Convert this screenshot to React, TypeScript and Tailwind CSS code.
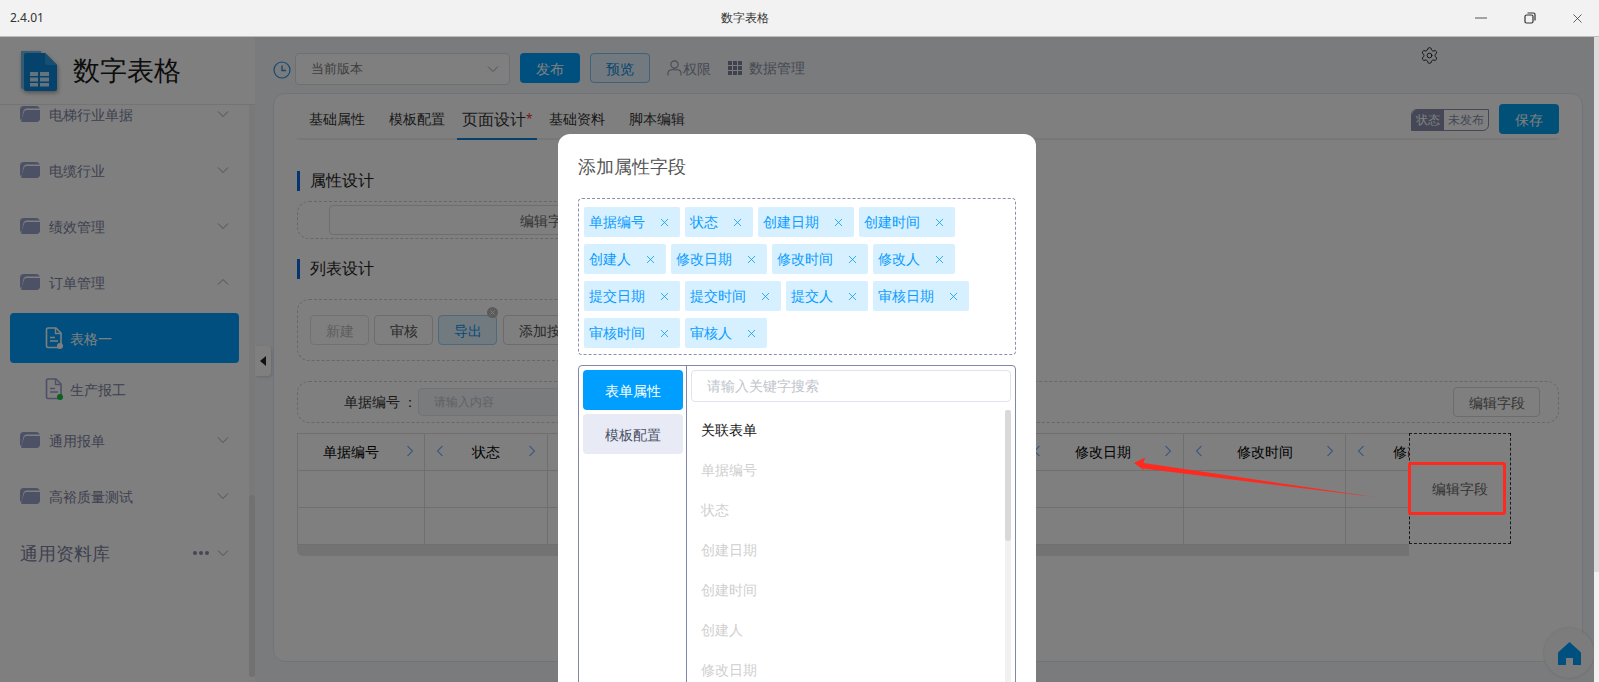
import { Settings, X } from "lucide-react";

const chips = [
  "单据编号", "状态", "创建日期", "创建时间", "创建人", "修改日期", "修改时间", "修改人",
  "提交日期", "提交时间", "提交人", "审核日期", "审核时间", "审核人",
];

const fieldList = ["单据编号", "状态", "创建日期", "创建时间", "创建人", "修改日期", "修改时间"];

const tableCols = ["状态", "创建日期", "创建时间", "创建人", "修改日期", "修改时间"];

function Chevron({ up = false }: { up?: boolean }) {
  return (
    <svg width="12" height="8" viewBox="0 0 12 8" fill="none" className={up ? "rotate-180" : ""}>
      <path d="M1 1.5 6 6.5 11 1.5" stroke="#9aa0b4" strokeWidth="1" />
    </svg>
  );
}

function ArrowIcon({ left = false }: { left?: boolean }) {
  return (
    <svg width="8" height="12" viewBox="0 0 8 12" fill="none" className="shrink-0">
      <path d={left ? "M6.5 1 1.5 6 6.5 11" : "M1.5 1 6.5 6 1.5 11"} stroke="#78b4ff" strokeWidth="1.1" />
    </svg>
  );
}

function FolderIcon() {
  return (
    <svg width="20" height="16" viewBox="0 0 20 16" className="shrink-0">
      <path d="M0 3.5C0 1.5 1.5 0 3.5 0H16c2 0 3.5 1 3.6 2.6H7C4.6 2.6 3.6 4 3.2 6L1.8 13 .8 14C.3 13.5 0 12.8 0 12Z" fill="#9aa2cc" />
      <path d="M6.4 4H20v8.5c0 2-1.5 3.5-3.5 3.5H3c-1 0-1.8-.4-2-1L4 6c.3-1.2 1-2 2.4-2Z" fill="#9aa2cc" />
    </svg>
  );
}

function DocIcon({ active = false }: { active?: boolean }) {
  const c = active ? "#ffffff" : "#9aa2cc";
  return (
    <svg width="18" height="22" viewBox="0 0 18 22" fill="none" className="shrink-0">
      <path d="M3 1h8l5 5v13a1.5 1.5 0 0 1-1.5 1.5H3A1.5 1.5 0 0 1 1.5 19V2.5A1.5 1.5 0 0 1 3 1Z" stroke={c} strokeWidth="1.6" />
      <path d="M10.5 1v5.5H16" stroke={c} strokeWidth="1.4" />
      <path d="M5 10.5h5M5 14h8" stroke={c} strokeWidth="1.6" />
      <circle cx="15" cy="19" r="3" fill={active ? "#ffffff" : "#10c23a"} />
    </svg>
  );
}

function Logo() {
  return (
    <svg width="38" height="42" viewBox="0 0 38 42" className="shrink-0 drop-shadow-[1px_2px_2px_rgba(0,0,0,0.35)]">
      <path d="M1 1h20v38H3a2 2 0 0 1-2-2Z" fill="#6fb6e6" />
      <path d="M6 3h19l12 12v24a2 2 0 0 1-2 2H6a2 2 0 0 1-2-2V5a2 2 0 0 1 2-2Z" fill="#0a86d8" />
      <path d="M25 3l12 12H27a2 2 0 0 1-2-2Z" fill="#2f9fe6" />
      <path d="M10 22h8v4h-8zM20 22h9v4h-9zM10 27.5h8v4h-8zM20 27.5h9v4h-9zM10 33h8v3.500h-8zM20 33h9v3.500h-9z" fill="#c9e6fa" />
    </svg>
  );
}

function NavRow({ label, up = false }: { label: string; up?: boolean }) {
  return (
    <div className="flex h-[56px] shrink-0 items-center pl-[20px] pr-[20px]">
      <FolderIcon />
      <span className="ml-[9px] text-[14px] text-[#7b819f]">{label}</span>
      <span className="ml-auto flex">
        <Chevron up={up} />
      </span>
    </div>
  );
}

function Sidebar() {
  return (
    <aside className="flex h-full w-[255px] shrink-0 flex-col bg-white">
      <div className="flex h-[68px] shrink-0 items-center border-b border-[#e8e8e8] bg-white pl-[20px]">
        <Logo />
        <span className="ml-[15px] text-[27px] text-[#1a1a1a]">数字表格</span>
      </div>
      <div className="flex min-h-0 flex-1">
        <nav className="min-w-0 flex-1 overflow-hidden">
          <div className="-mt-[19px]">
            <NavRow label="电梯行业单据" />
            <NavRow label="电缆行业" />
            <NavRow label="绩效管理" />
            <NavRow label="订单管理" up />
            <div className="ml-[10px] mt-[3px] flex h-[50px] w-[229px] items-center rounded-[4px] bg-[#009fff] pl-[35px] text-white">
              <DocIcon active />
              <span className="ml-[7px] text-[14px]">表格一</span>
            </div>
            <div className="flex h-[54px] items-center pb-[2px] pl-[45px]">
              <DocIcon />
              <span className="ml-[7px] text-[14px] text-[#7b819f]">生产报工</span>
            </div>
            <div className="-mt-[5px]">
              <NavRow label="通用报单" />
              <NavRow label="高裕质量测试" />
            </div>
            <div className="mt-[1px] flex h-[56px] items-center pl-[20px] pr-[20px]">
              <span className="text-[18px] text-[#7b819f]">通用资料库</span>
              <span className="ml-auto mr-[8px] flex gap-[2px]">
                <i className="block size-[4px] rounded-full bg-[#8a90a8]" />
                <i className="block size-[4px] rounded-full bg-[#8a90a8]" />
                <i className="block size-[4px] rounded-full bg-[#8a90a8]" />
              </span>
              <Chevron />
            </div>
          </div>
        </nav>
        <div className="mb-[5px] w-[6px] shrink-0 bg-[#f3f3f3]">
          <div className="mt-[390px] h-[182px] rounded-[3px] bg-[#e2e2e2]" />
        </div>
      </div>
    </aside>
  );
}

function TopBar() {
  return (
    <div className="flex h-[56px] shrink-0 items-start pt-[16px]">
      <svg width="18" height="18" viewBox="0 0 18 18" fill="none" className="mt-[8px] shrink-0">
        <circle cx="9" cy="9" r="8" stroke="#2f8fe0" strokeWidth="1.2" />
        <path d="M9 4.500V9.500H13" stroke="#2f8fe0" strokeWidth="1.4" />
      </svg>
      <div className="ml-[4px] flex h-[32px] w-[215px] items-center rounded-[4px] border border-[#dcdfe6] bg-white pl-[15px] pr-[10px]">
        <span className="text-[13px] text-[#7d7d7d]">当前版本</span>
        <span className="ml-auto flex"><Chevron /></span>
      </div>
      <button className="ml-[10px] h-[30px] w-[60px] rounded-[4px] bg-[#00a0ff] text-[14px] text-white">发布</button>
      <button className="ml-[10px] h-[30px] w-[60px] rounded-[4px] border border-[#7cc4ee] bg-[#e5f4ff] text-[14px] text-[#0a8be0]">预览</button>
      <div className="ml-[17px] flex h-[30px] items-center text-[#8e93a8]">
        <svg width="15" height="16" viewBox="0 0 15 16" fill="none" className="shrink-0">
          <circle cx="7.500" cy="4.500" r="3.600" stroke="#9095a8" strokeWidth="1.100" />
          <path d="M1 15.500v-2C1 11 3 9.800 5 9.800h5c2 0 4 1.200 4 3.700v2" stroke="#9095a8" strokeWidth="1.100" />
        </svg>
        <span className="ml-[1px] text-[14px]">权限</span>
      </div>
      <div className="ml-[17px] flex h-[30px] items-center text-[#8e93a8]">
        <span className="grid grid-cols-3 gap-[1px]">
          {Array.from({ length: 9 }).map((_, i) => (
            <i key={i} className="block size-[4px] bg-[#7e849c]" />
          ))}
        </span>
        <span className="ml-[7px] text-[13.500px]">数据管理</span>
      </div>
      <Settings className="ml-[615px] mt-[-7px] size-[19px] text-[#222222]" strokeWidth={1.200} />
    </div>
  );
}

function Heading({ children }: { children: string }) {
  return (
    <div className="flex h-[20px] items-center border-l-[3px] border-[#0a6be0] pb-[2px] pl-[10px] text-[16px] font-medium text-[#222222]">
      {children}
    </div>
  );
}

function ActionButton({ children, tone = "plain" }: { children: string; tone?: "plain" | "muted" | "blue" }) {
  const cls =
    tone === "muted"
      ? "text-[#bdbdbd] border-[#e2e2e2]"
      : tone === "blue"
        ? "text-[#0a96f0] border-[#9dd3f5] bg-[#e3f4ff]"
        : "text-[#555555] border-[#d8d8d8]";
  return (
    <button className={`h-[30px] w-[59px] shrink-0 rounded-[4px] border text-[14px] ${cls}`}>{children}</button>
  );
}

function DesignTable() {
  return (
    <div className="relative mt-[10px]">
      <div className="w-[1112px] overflow-hidden">
        <div className="grid w-max grid-cols-[127px_123px_158px_158px_158px_162px_162px_162px] grid-rows-[37px_37px_37px] border-l border-t border-[#dedede] text-[14px] text-black">
          <div className="flex items-center border-b border-r border-[#dedede] pb-[2px] pl-[25px] pr-[10px]">
            单据编号
            <span className="ml-auto flex"><ArrowIcon /></span>
          </div>
          {tableCols.map((col) => (
            <div key={col} className="flex items-center justify-between border-b border-r border-[#dedede] px-[11px] pb-[2px]">
              <ArrowIcon left />
              <span>{col}</span>
              <ArrowIcon />
            </div>
          ))}
          <div className="flex items-center border-b border-r border-[#dedede] pb-[2px] pl-[11px]">
            <ArrowIcon left />
            <span className="ml-[28px]">修改人</span>
          </div>
          {Array.from({ length: 16 }).map((_, i) => (
            <div key={i} className="border-b border-r border-[#dedede]" />
          ))}
        </div>
        <div className="h-[11px] rounded-bl-[6px] rounded-tl-[2px] bg-[#e6e6e6]" />
      </div>
      <div className="absolute left-[1112px] top-0 flex h-[111px] w-[102px] items-center justify-center border border-dashed border-[#333333] bg-white text-[14px] text-[#666666]">
        编辑字段
      </div>
    </div>
  );
}

function MainCard() {
  return (
    <div className="flex min-h-0 flex-1 flex-col rounded-[12px] border border-[#dfe8f7] bg-white px-[23px]">
      <div className="flex h-[46px] shrink-0 items-start border-b-2 border-[#eeeeee]">
        <div className="flex h-[46px] items-center px-[12px] pt-[3px] text-[14px] text-[#333333]">基础属性</div>
        <div className="flex h-[46px] items-center px-[12px] pt-[3px] text-[14px] text-[#333333]">模板配置</div>
        <div className="flex h-[46px] w-[80px] items-center border-b-2 border-[#0a84d6] pl-[5px] pt-[5px] text-[16px] text-[#333333]">
          页面设计<span className="text-[12px] text-[#f03030]">*</span>
        </div>
        <div className="flex h-[46px] items-center px-[12px] pt-[3px] text-[14px] text-[#333333]">基础资料</div>
        <div className="flex h-[46px] items-center px-[12px] pt-[3px] text-[14px] text-[#333333]">脚本编辑</div>
        <div className="ml-auto flex h-[44px] items-start pt-[10px]">
          <div className="mt-[5px] flex h-[22px] w-[78px] overflow-hidden rounded-br-[6px] rounded-tl-[6px] border border-[#8a8fae] text-[12px]">
            <span className="flex w-[32px] items-center justify-center bg-[#8a8fae] text-white">状态</span>
            <span className="flex flex-1 items-center justify-center text-[#8a8fae]">未发布</span>
          </div>
          <button className="ml-[10px] h-[30px] w-[60px] rounded-[4px] bg-[#00a0f0] text-[14px] font-medium text-white">保存</button>
        </div>
      </div>

      <div className="mt-[31px]"><Heading>属性设计</Heading></div>
      <div className="mt-[10px] flex h-[38px] w-[505px] items-center rounded-[12px] border border-dashed border-[#cfcfcf] pl-[31px]">
        <div className="flex h-[30px] w-[437px] items-center justify-center rounded-[4px] border border-[#dcdcdc] text-[14px] text-[#666666]">编辑字段</div>
      </div>

      <div className="mt-[20px]"><Heading>列表设计</Heading></div>
      <div className="mt-[20px] flex h-[62px] w-[505px] items-center gap-[5px] rounded-[12px] border border-dashed border-[#cfcfcf] pl-[12px]">
        <ActionButton tone="muted">新建</ActionButton>
        <ActionButton>审核</ActionButton>
        <div className="relative">
          <ActionButton tone="blue">导出</ActionButton>
          <span className="absolute -right-[1px] -top-[8px] flex size-[11px] items-center justify-center rounded-full bg-[#b8b8b8]">
            <X className="size-[7px] text-white" strokeWidth={3} />
          </span>
        </div>
        <button className="ml-[1px] h-[30px] w-[88px] shrink-0 rounded-[4px] border border-[#d8d8d8] text-[14px] text-[#555555]">添加按钮</button>
      </div>

      <div className="mt-[20px] flex h-[42px] w-[1262px] items-center rounded-[12px] border border-dashed border-[#cfcfcf]">
        <span className="ml-[46px] pb-[2px] text-[14px] text-[#333333]">单据编号</span>
        <span className="ml-[3px] pb-[2px] text-[14px] text-[#333333]">：</span>
        <div className="ml-[1px] flex h-[28px] w-[300px] items-center rounded-[4px] border border-[#e4e7ed] bg-[#f5f7fa] pl-[15px] text-[12px] text-[#c0c4cc]">请输入内容</div>
        <button className="ml-auto mr-[18px] h-[30px] w-[87px] rounded-[4px] border border-[#d8d8d8] text-[14px] text-[#666666]">编辑字段</button>
      </div>

      <DesignTable />
    </div>
  );
}

function AddFieldModal() {
  return (
    <div className="absolute left-[558px] top-[97px] h-[640px] w-[478px] rounded-[12px] bg-white px-[20px] pt-[20px]">
      <h2 className="flex h-[24px] items-center text-[18px] font-normal text-[#555555]">添加属性字段</h2>
      <div className="mt-[20px] flex flex-wrap content-start gap-x-[5px] gap-y-[7px] rounded-[4px] border border-dashed border-[#8a8fae] pb-[6px] pl-[5px] pr-[5px] pt-[8px]">
        {chips.map((chip) => (
          <span key={chip} className="flex h-[30px] items-center rounded-[2px] bg-[#d6f0ff] pb-[2px] pl-[5px] pr-[9px] text-[14px] text-[#0a9bff]">
            {chip}
            <X className="ml-[13px] mt-[2px] size-[13px] text-[#0a9bff]" strokeWidth={1.500} />
          </span>
        ))}
      </div>
      <div className="mt-[10px] flex h-[400px] rounded-[4px] border border-[#8088aa]">
        <div className="flex w-[108px] shrink-0 flex-col gap-[4px] border-r border-[#8088aa] pl-[4px] pt-[4px]">
          <button className="h-[40px] w-[100px] rounded-[4px] bg-[#009fff] text-[14px] font-medium text-white">表单属性</button>
          <button className="h-[40px] w-[100px] rounded-[4px] bg-[#e8ebf5] text-[14px] text-[#4a4f66]">模板配置</button>
        </div>
        <div className="min-w-0 flex-1 pl-[4px] pr-[4px] pt-[4px]">
          <div className="flex h-[32px] items-center rounded-[4px] border border-[#dfe3ee] pb-[2px] pl-[15px] text-[14px] text-[#c0c4cc]">请输入关键字搜索</div>
          <div className="mt-[8px] flex h-[360px]">
            <div className="flex-1 pl-[10px] text-[14px] text-[#cfcfcf]">
              <div className="flex h-[40px] items-center pb-[2px] text-[#111111]">关联表单</div>
              {fieldList.map((f) => (
                <div key={f} className="flex h-[40px] items-center pb-[2px]">{f}</div>
              ))}
            </div>
            <div className="w-[6px] shrink-0 bg-[#f1f1f1]">
              <div className="h-[131px] rounded-[3px] bg-[#d9d9d9]" />
            </div>
          </div>
        </div>
      </div>
    </div>
  );
}

export default function App() {
  return (
    <div className="relative h-[682px] w-[1599px] overflow-hidden bg-white font-['Liberation_Sans','Noto_Sans_CJK_SC',sans-serif]">
      {/* title bar */}
      <header className="flex h-[37px] items-center border-b border-[#bdbdbd] bg-[#f2f2f2] pl-[10px] text-[12px] text-[#333333]">
        <span className="w-[711px]">2.4.01</span>
        <span>数字表格</span>
        <svg width="12" height="2" viewBox="0 0 12 2" className="ml-[706px] shrink-0"><path d="M0 1h12" stroke="#888888" strokeWidth="1.500" /></svg>
        <svg width="12" height="12" viewBox="0 0 12 12" fill="none" className="ml-[37px] shrink-0">
          <rect x="1" y="3" width="8" height="8" rx="1.500" stroke="#333333" strokeWidth="1.200" />
          <path d="M3.500 1h6a1.500 1.500 0 0 1 1.500 1.500v6" stroke="#333333" strokeWidth="1.200" />
        </svg>
        <X className="ml-[34px] size-[15px] text-[#333333]" strokeWidth={1.200} />
      </header>

      <div className="flex h-[645px]">
        <div className="relative flex min-w-0 flex-1 overflow-hidden">
          <Sidebar />
          <main className="flex h-full min-w-0 flex-1 flex-col bg-[#f3f6fb] pb-[20px] pl-[18px] pr-[11px]">
            <TopBar />
            <MainCard />
          </main>

          {/* collapse handle */}
          <div className="absolute left-[255px] top-[309px] flex h-[30px] w-[16px] items-center justify-center rounded-r-[4px] bg-white shadow-[1px_1px_3px_rgba(0,0,0,0.15)]">
            <span className="border-y-[5px] border-r-[6px] border-y-transparent border-r-[#222222]" />
          </div>

          {/* home button */}
          <div className="absolute left-[1544px] top-[591px] flex size-[50px] items-center justify-center rounded-full bg-[#f8f8f8] shadow-[0_0_3px_rgba(0,0,0,0.15)]">
            <svg width="23" height="23" viewBox="0 0 23 23">
              <path d="M11.500 0 23 10.500V23h-8v-7H8v7H0V10.500Z" fill="#00a0ff" />
            </svg>
          </div>

          <div className="absolute inset-0 bg-black/50" />
          <AddFieldModal />

          {/* annotation drawn on the screenshot */}
          <div className="absolute left-[1408px] top-[425px] h-[53px] w-[98px] rounded-[3px] border-[3px] border-[#ff2a1f]" />
          <svg width="250" height="50" viewBox="0 0 250 50" className="absolute left-[1130px] top-[413px]">
            <path d="M4 13 15 7.500 13.500 13 244 47 13 18.500 15 21Z" fill="#ff2a1f" />
          </svg>
        </div>

        {/* page scrollbar */}
        <div className="w-[5px] shrink-0 bg-[#f1f1f1]">
          <div className="h-[535px] bg-[#dcdcdc]" />
        </div>
      </div>
    </div>
  );
}
